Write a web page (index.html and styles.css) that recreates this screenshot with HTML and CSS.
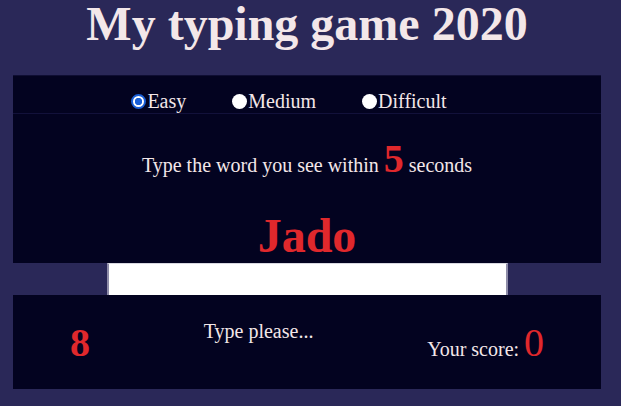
FILE: index.html
```html
<!DOCTYPE html>
<html>
<head>
<meta charset="utf-8">
<title>My typing game 2020</title>
<link rel="stylesheet" href="styles.css">
</head>
<body>
<h1 class="title">My typing game 2020</h1>
<section class="panel board">
  <div class="levels">
    <label class="level"><input type="radio" name="level" class="radio" checked>Easy</label>
    <label class="level"><input type="radio" name="level" class="radio">Medium</label>
    <label class="level"><input type="radio" name="level" class="radio">Difficult</label>
  </div>
  <div class="stage">
    <p class="instruction">Type the word you see within <span class="seconds">5</span> seconds</p>
    <p class="word">Jado</p>
  </div>
</section>
<div class="input-row"><input type="text" class="word-input"></div>
<section class="panel stats">
  <div class="time">8</div>
  <div class="message">Type please...</div>
  <div class="score">Your score: <span class="score-value">0</span></div>
</section>
</body>
</html>
```
FILE: styles.css
```css
html, body {
  margin: 0;
  padding: 0;
}
body {
  background: #2a2858;
  color: #f3e7e9;
  font-family: "Liberation Serif", "Times New Roman", serif;
  font-size: 20px;
  height: 406px;
  overflow: hidden;
}
.title {
  margin: 0 0 27px;
  padding-right: 7px;
  font-size: 48px;
  line-height: 48px;
  font-weight: bold;
  text-align: center;
}
.panel {
  background: #030320;
  margin: 0 20px 0 13px;
}
.board {
  border-top: 1px solid #0f0e33;
}
.levels {
  display: flex;
  justify-content: center;
  padding: 14px 0 0 2px;
  line-height: 23px;
  border-bottom: 1px solid #12113a;
}
.level {
  margin-right: 42px;
  white-space: nowrap;
}
.radio {
  appearance: none;
  -webkit-appearance: none;
  width: 15px;
  height: 15px;
  margin: 3px 1px 0 4px;
  border-radius: 50%;
  background: #ffffff;
  box-sizing: border-box;
  vertical-align: -1px;
}
.radio:checked {
  border: 2px solid #1a5fd6;
  background: radial-gradient(circle, #1a5fd6 0 3.4px, #ffffff 4px);
}
.stage {
  padding-top: 22px;
  text-align: center;
}
.instruction {
  margin: 0 0 26px;
  line-height: 23px;
}
.seconds {
  color: #e0282c;
  font-weight: bold;
  font-size: 40px;
  line-height: 46px;
}
.word {
  margin: 0;
  color: #e0282c;
  font-size: 48px;
  font-weight: bold;
  line-height: 55px;
}
.input-row {
  display: flex;
  justify-content: center;
  padding-right: 7px;
}
.word-input {
  width: 401px;
  height: 32px;
  margin: 0;
  padding: 0;
  box-sizing: border-box;
  background: #ffffff;
  border: none;
  border-left: 2px solid #8e8ca8;
  border-right: 2px solid #8e8ca8;
  border-top: 1px solid #d8d8e0;
  outline: none;
}
.stats {
  height: 94px;
  box-sizing: border-box;
  padding-top: 25px;
  display: flex;
  justify-content: space-around;
  align-items: flex-start;
}
.time {
  color: #e0282c;
  font-weight: bold;
  font-size: 40px;
  line-height: 46px;
}
.message {
  line-height: 23px;
}
.score {
  line-height: 46px;
}
.score-value {
  color: #e0282c;
  font-size: 40px;
}
```
